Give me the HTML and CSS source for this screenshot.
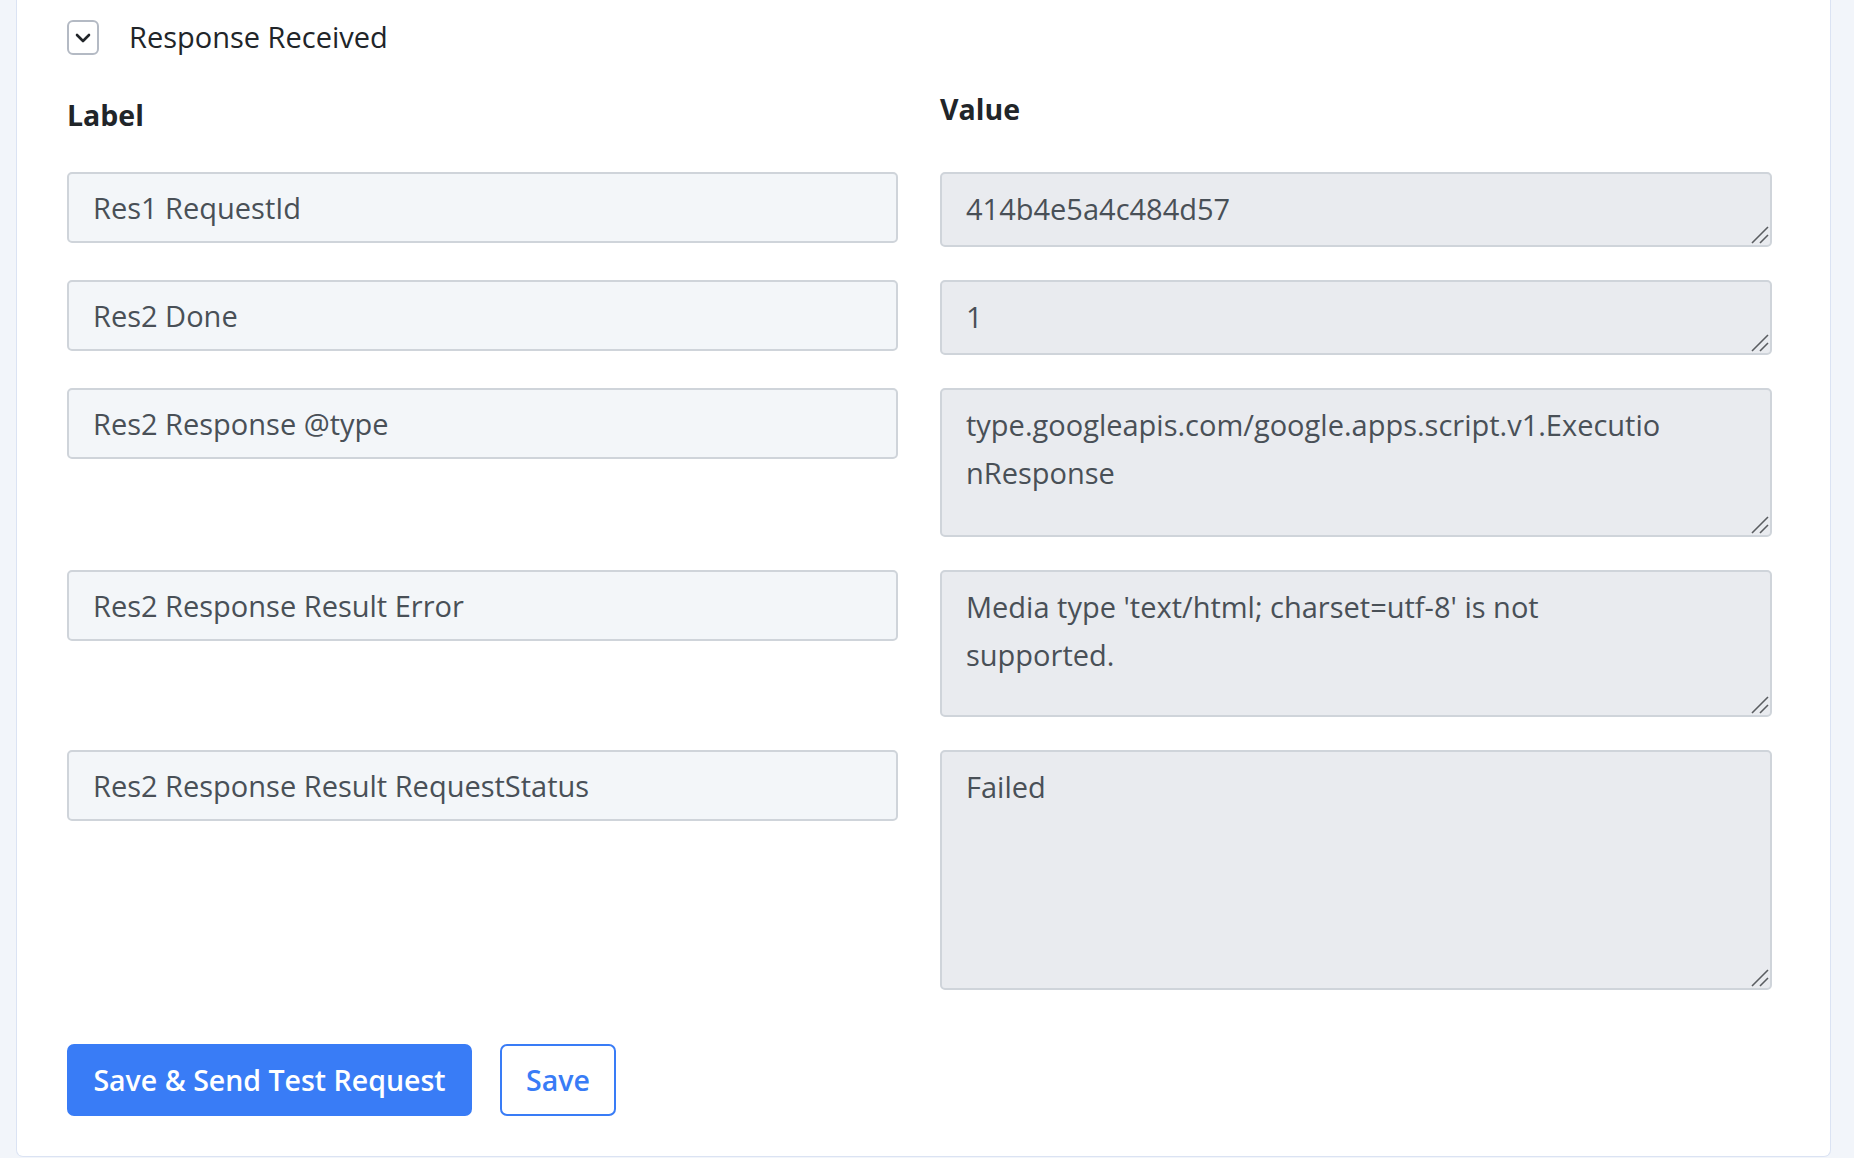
FILE: index.html
```html
<!DOCTYPE html>
<html>
<head>
<meta charset="utf-8">
<link rel="stylesheet" href="styles.css">
</head>
<body>
<div class="card">
  <div class="section-head">
    <span class="toggle">
      <svg width="18" height="12" viewBox="0 0 18 12"><path d="M3 3 L9 9 L15 3" fill="none" stroke="#212529" stroke-width="2.6" stroke-linecap="round" stroke-linejoin="round"/></svg>
    </span>
    <span class="section-title">Response Received</span>
  </div>
  <div class="heads">
    <div class="head head-label">Label</div>
    <div class="head head-value">Value</div>
  </div>
  <div class="rows">
    <div class="row">
      <input class="field" type="text" value="Res1 RequestId">
      <div class="value-wrap">
        <textarea class="value h1" readonly>414b4e5a4c484d57</textarea>
        <svg class="grip" width="20" height="20" viewBox="0 0 20 20"><path d="M2 18 L18 2 M10 18 L18 10" stroke="#5a5d61" stroke-width="1.6" fill="none"/></svg>
      </div>
    </div>
    <div class="row">
      <input class="field" type="text" value="Res2 Done">
      <div class="value-wrap">
        <textarea class="value h1" readonly>1</textarea>
        <svg class="grip" width="20" height="20" viewBox="0 0 20 20"><path d="M2 18 L18 2 M10 18 L18 10" stroke="#5a5d61" stroke-width="1.6" fill="none"/></svg>
      </div>
    </div>
    <div class="row">
      <input class="field" type="text" value="Res2 Response @type">
      <div class="value-wrap">
        <textarea class="value h2" readonly>type.googleapis.com/google.apps.script.v1.Executio
nResponse</textarea>
        <svg class="grip" width="20" height="20" viewBox="0 0 20 20"><path d="M2 18 L18 2 M10 18 L18 10" stroke="#5a5d61" stroke-width="1.6" fill="none"/></svg>
      </div>
    </div>
    <div class="row">
      <input class="field" type="text" value="Res2 Response Result Error">
      <div class="value-wrap">
        <textarea class="value h3" readonly>Media type 'text/html; charset=utf-8' is not
supported.</textarea>
        <svg class="grip" width="20" height="20" viewBox="0 0 20 20"><path d="M2 18 L18 2 M10 18 L18 10" stroke="#5a5d61" stroke-width="1.6" fill="none"/></svg>
      </div>
    </div>
    <div class="row">
      <input class="field" type="text" value="Res2 Response Result RequestStatus">
      <div class="value-wrap">
        <textarea class="value h4" readonly>Failed</textarea>
        <svg class="grip" width="20" height="20" viewBox="0 0 20 20"><path d="M2 18 L18 2 M10 18 L18 10" stroke="#5a5d61" stroke-width="1.6" fill="none"/></svg>
      </div>
    </div>
  </div>
  <div class="actions">
    <button class="btn btn-primary">Save &amp; Send Test Request</button>
    <button class="btn btn-outline">Save</button>
  </div>
</div>
</body>
</html>
```

FILE: styles.css
```css
html, body {
  margin: 0;
  padding: 0;
}
body {
  background: #f2f5fa;
  font-family: "Open Sans", "Lato", sans-serif;
  height: 1158px;
  overflow: hidden;
}
.card {
  box-sizing: border-box;
  margin-left: 16px;
  width: 1815px;
  height: 1157px;
  background: #ffffff;
  border: 1px solid #dbe3f3;
  border-top: none;
  border-radius: 0 0 7px 7px;
  padding: 20px 57px 0 50px;
}
.section-head {
  display: flex;
  align-items: center;
  height: 35px;
}
.toggle {
  box-sizing: border-box;
  width: 32px;
  height: 35px;
  border: 2px solid #b4bac4;
  border-radius: 6px;
  display: flex;
  align-items: center;
  justify-content: center;
}
.section-title {
  margin-left: 30px;
  font-size: 29px;
  color: #212529;
  margin-top: -2px;
}
.heads {
  display: grid;
  grid-template-columns: 831px 832px;
  column-gap: 42px;
  height: 117px;
}
.head {
  font-weight: 700;
  font-size: 28.5px;
  color: #212529;
}
.head-label {
  margin-top: 41px;
}
.head-value {
  margin-top: 35px;
}
.rows {
  display: flex;
  flex-direction: column;
  gap: 33px;
}
.row {
  display: grid;
  grid-template-columns: 831px 832px;
  column-gap: 42px;
  align-items: start;
}
.value-wrap {
  position: relative;
}
.grip {
  position: absolute;
  right: 2px;
  bottom: 2px;
}
.field, .value {
  box-sizing: border-box;
  margin: 0;
  font-family: "Open Sans", "Lato", sans-serif;
  font-size: 29px;
  color: #495057;
  border: 2px solid #cfd4da;
  border-radius: 5px;
  padding: 0 24px;
  outline: none;
}
.field {
  height: 71px;
  width: 100%;
  background: #f3f6f9;
}
.value {
  width: 100%;
  background: #e9ebef;
  line-height: 48px;
  padding-top: 11px;
  padding-bottom: 11px;
  resize: none;
  overflow: hidden;
  display: block;
}
.h1 { height: 75px; }
.h2 { height: 149px; }
.h3 { height: 147px; }
.h4 { height: 240px; }
.actions {
  display: flex;
  gap: 28px;
  margin-top: 54px;
}
.btn {
  box-sizing: border-box;
  height: 72px;
  font-family: "Open Sans", "Lato", sans-serif;
  font-size: 28.5px;
  font-weight: 600;
  border-radius: 7px;
  padding: 0 16px;
  cursor: pointer;
}
.btn-primary {
  width: 405px;
  background: #397cf6;
  border: 2px solid #397cf6;
  color: #ffffff;
}
.btn-outline {
  width: 116px;
  background: #ffffff;
  border: 2px solid #397cf6;
  color: #397cf6;
}
```
